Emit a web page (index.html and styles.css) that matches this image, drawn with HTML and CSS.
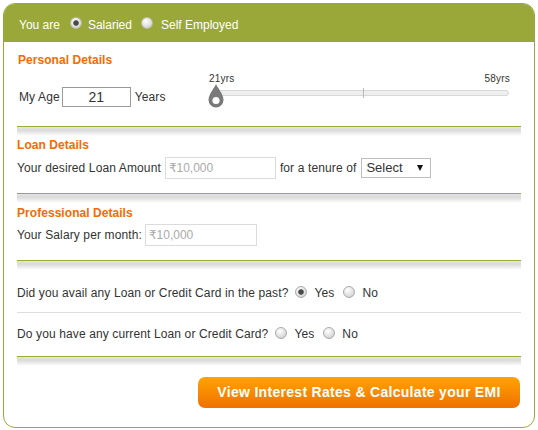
FILE: index.html
```html
<!DOCTYPE html>
<html lang="en">
<head>
<meta charset="utf-8">
<title>EMI Calculator</title>
<link rel="stylesheet" href="styles.css">
</head>
<body>
<div class="card">
  <div class="head">
    <span class="head-label">You are</span>
    <label class="head-opt"><input type="radio" name="emp" class="radio radio-head" checked><span>Salaried</span></label>
    <label class="head-opt"><input type="radio" name="emp" class="radio radio-head"><span>Self Employed</span></label>
  </div>
  <div class="body">
    <h3 class="sec sec-personal">Personal Details</h3>
    <div class="age-row">
      <div class="age">
        <span>My Age</span>
        <span class="age-box">21</span>
        <span>Years</span>
      </div>
      <div class="slider">
        <div class="slider-labels"><span>21yrs</span><span>58yrs</span></div>
        <div class="track">
          <span class="tick"></span>
          <svg class="knob" width="16" height="24" viewBox="0 0 16 24"><path d="M8 0 C9 3 15.5 10 15.5 16 A7.5 7.5 0 0 1 0.5 16 C0.5 10 7 3 8 0 Z" fill="#7a7a7a"/><circle cx="8" cy="16.5" r="3.6" fill="#fff"/></svg>
        </div>
      </div>
    </div>
    <div class="divider div-personal"></div>

    <h3 class="sec sec-loan">Loan Details</h3>
    <div class="row row-loan">
      <span>Your desired Loan Amount</span>
      <input class="field field-loan" type="text" placeholder="₹10,000">
      <span class="after">for a tenure of</span>
      <div class="select"><span>Select</span><span class="caret"></span></div>
    </div>
    <div class="divider div-row"></div>

    <h3 class="sec sec-prof">Professional Details</h3>
    <div class="row row-salary">
      <span>Your Salary per month:</span>
      <input class="field field-salary" type="text" placeholder="₹10,000">
    </div>
    <div class="divider div-row"></div>

    <div class="q q1">
      <span>Did you avail any Loan or Credit Card in the past?</span>
      <label class="q-opt"><input type="radio" name="q1" class="radio" checked><span>Yes</span></label>
      <label class="q-opt"><input type="radio" name="q1" class="radio"><span>No</span></label>
    </div>
    <div class="q q2">
      <span>Do you have any current Loan or Credit Card?</span>
      <label class="q-opt"><input type="radio" name="q2" class="radio"><span>Yes</span></label>
      <label class="q-opt"><input type="radio" name="q2" class="radio"><span>No</span></label>
    </div>
    <div class="divider div-q"></div>

    <div class="cta-row">
      <button class="cta" type="button">View Interest Rates &amp; Calculate your EMI</button>
    </div>
  </div>
</div>
</body>
</html>
```

FILE: styles.css
```css
* { box-sizing: border-box; }
html, body { margin: 0; padding: 0; background: #fff; }
body {
  font-family: "Liberation Sans", Arial, "DejaVu Sans", sans-serif;
  font-size: 12px;
  line-height: 14px;
  color: #333;
  letter-spacing: 0.12px;
}
.card {
  margin: 3px 0 0 3px;
  width: 532px;
  height: 425px;
  border: 1px solid #9aa83a;
  border-radius: 12px;
  overflow: hidden;
  background: #fff;
}
.head {
  height: 38px;
  background: #9aa83a;
  color: #fff;
  display: flex;
  align-items: center;
  padding: 3px 0 0 15px;
  letter-spacing: 0;
}
.head-opt { display: flex; align-items: center; }
.radio {
  -webkit-appearance: none;
  appearance: none;
  margin: 0;
  flex: none;
  width: 12px;
  height: 12px;
  border-radius: 50%;
  border: 1px solid #ababab;
  background: radial-gradient(circle at 38% 32%, #ffffff 0, #e6e6e6 45%, #c6c6c6 100%);
}
.radio:checked {
  background:
    radial-gradient(circle at 50% 50%, #4a4a4a 0, #4a4a4a 2.3px, rgba(74,74,74,0) 3.2px),
    radial-gradient(circle at 38% 32%, #ffffff 0, #e6e6e6 45%, #c6c6c6 100%);
}
.radio-head { border-color: #b9bea0; margin: 0 6px 3px 10px; }
.head-opt + .head-opt .radio-head { margin-left: 9px; margin-right: 8px; }

.body { padding: 11px 13px 0 13px; }
.sec {
  margin: 0;
  font-size: 12px;
  line-height: 14px;
  font-weight: bold;
  color: #f46b00;
  letter-spacing: 0.05px;
}
.sec-personal { padding-left: 1px; }
.sec-loan { margin-top: 2px; }
.sec-prof { margin-top: 3px; }

.age-row {
  display: flex;
  justify-content: space-between;
  align-items: flex-start;
  margin-right: 11px;
}
.age {
  display: flex;
  align-items: center;
  margin-top: 20px;
  padding-left: 2px;
}
.age-box {
  width: 69px;
  height: 20px;
  margin: 0 4px 0 2px;
  border: 1px solid #9a9a9a;
  text-align: center;
  font-size: 14px;
  line-height: 18px;
  letter-spacing: 0;
}
.slider { width: 302px; margin-top: 6px; }
.slider-labels {
  display: flex;
  justify-content: space-between;
  font-size: 10px;
  line-height: 12px;
  letter-spacing: 0.2px;
  padding-left: 1px;
}
.track {
  position: relative;
  margin: 5px 1px 0 8px;
  height: 6px;
  border: 1px solid #d8d8d8;
  border-radius: 3px;
  background: #efefef;
}
.tick {
  position: absolute;
  left: 146px;
  top: -3px;
  width: 1px;
  height: 10px;
  background: #b8b8b8;
}
.knob { position: absolute; left: -9px; top: -7px; }

.divider {
  height: 10px;
  border-top: 1px solid #9aad34;
  background: linear-gradient(#e4e4e4, #dadada 35%, #ffffff);
}
.div-personal { margin-top: 19px; }
.div-row { margin-top: 14px; }
.div-q { margin-top: 12px; }

.row { display: flex; align-items: center; height: 22px; }
.row-loan { margin-top: 5px; }
.row-salary { margin-top: 4px; }
.field {
  height: 22px;
  border: 1px solid #dcdcdc;
  padding: 0 0 0 3px;
  font-family: "Liberation Sans", Arial, "DejaVu Sans", sans-serif;
  font-size: 12px;
  color: #333;
  background: #fff;
  outline: none;
}
.field::placeholder { color: #aaa; }
.field-loan { width: 111px; margin-left: 4px; }
.field-salary { width: 112px; margin-left: 3px; }
.after { margin-left: 4px; }
.select {
  display: flex;
  align-items: center;
  justify-content: space-between;
  width: 70px;
  height: 20px;
  margin-left: 5px;
  padding: 0 7px 0 4px;
  border: 1px solid #bdbdbd;
  font-size: 13px;
  color: #333;
  letter-spacing: 0;
}
.caret {
  width: 0;
  height: 0;
  border-left: 3.5px solid transparent;
  border-right: 3.5px solid transparent;
  border-top: 6px solid #111;
}

.q { display: flex; align-items: center; line-height: 20px; }
.q1 { padding: 13px 0 9px; border-bottom: 1px solid #dedede; }
.q2 { padding-top: 11px; }
.q-opt { display: flex; align-items: center; }
.q-opt .radio { margin: 0 7px 2px 7px; }
.q-opt + .q-opt .radio { margin-left: 9px; }

.cta-row { display: flex; justify-content: flex-end; margin-top: 11px; padding-right: 1px; }
.cta {
  width: 322px;
  height: 31px;
  padding: 0;
  border: 0;
  border-radius: 7px;
  background: linear-gradient(#ffa400, #f07000);
  color: #fff;
  font-family: "Liberation Sans", Arial, sans-serif;
  font-weight: bold;
  font-size: 14px;
  line-height: 31px;
  letter-spacing: 0.3px;
  text-align: center;
}
```
